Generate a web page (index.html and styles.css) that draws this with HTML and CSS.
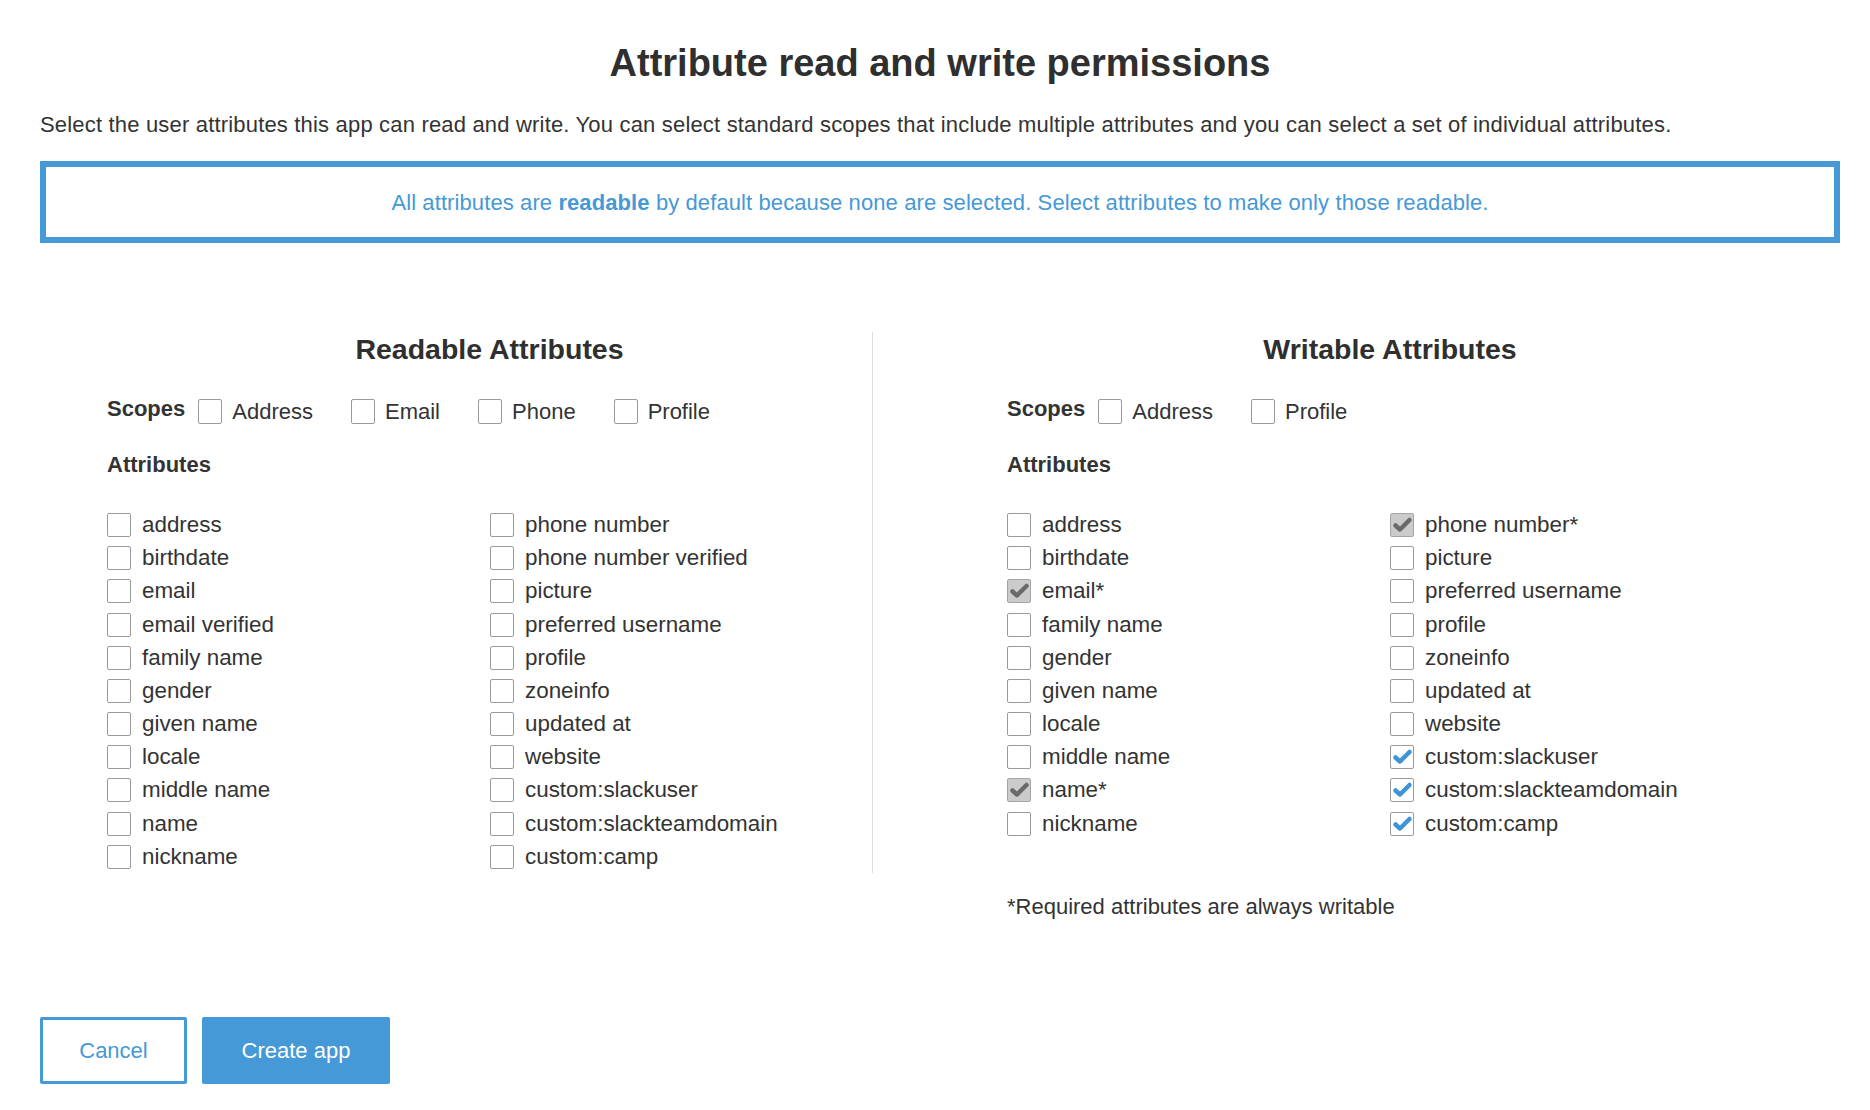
FILE: index.html
```html
<!DOCTYPE html>
<html lang="en">
<head>
<meta charset="utf-8">
<title>Attribute read and write permissions</title>
<link rel="stylesheet" href="styles.css">
</head>
<body>
<div class="page">
  <h1 class="title">Attribute read and write permissions</h1>
  <p class="desc">Select the user attributes this app can read and write. You can select standard scopes that include multiple attributes and you can select a set of individual attributes.</p>
  <div class="info">All attributes are <b>readable</b> by default because none are selected. Select attributes to make only those readable.</div>

  <div class="columns">
    <section class="col">
      <div class="col-inner divider">
        <h2 class="col-title">Readable Attributes</h2>
        <div class="scopes">
          <span class="scopes-label">Scopes</span>
          <label class="scope"><span class="cb"></span>Address</label>
          <label class="scope"><span class="cb"></span>Email</label>
          <label class="scope"><span class="cb"></span>Phone</label>
          <label class="scope"><span class="cb"></span>Profile</label>
        </div>
        <div class="attr-label">Attributes</div>
        <div class="attr-grid">
          <ul class="attr-list">
            <li><span class="cb"></span>address</li>
            <li><span class="cb"></span>birthdate</li>
            <li><span class="cb"></span>email</li>
            <li><span class="cb"></span>email verified</li>
            <li><span class="cb"></span>family name</li>
            <li><span class="cb"></span>gender</li>
            <li><span class="cb"></span>given name</li>
            <li><span class="cb"></span>locale</li>
            <li><span class="cb"></span>middle name</li>
            <li><span class="cb"></span>name</li>
            <li><span class="cb"></span>nickname</li>
          </ul>
          <ul class="attr-list">
            <li><span class="cb"></span>phone number</li>
            <li><span class="cb"></span>phone number verified</li>
            <li><span class="cb"></span>picture</li>
            <li><span class="cb"></span>preferred username</li>
            <li><span class="cb"></span>profile</li>
            <li><span class="cb"></span>zoneinfo</li>
            <li><span class="cb"></span>updated at</li>
            <li><span class="cb"></span>website</li>
            <li><span class="cb"></span>custom:slackuser</li>
            <li><span class="cb"></span>custom:slackteamdomain</li>
            <li><span class="cb"></span>custom:camp</li>
          </ul>
        </div>
      </div>
    </section>

    <section class="col">
      <div class="col-inner">
        <h2 class="col-title">Writable Attributes</h2>
        <div class="scopes">
          <span class="scopes-label">Scopes</span>
          <label class="scope"><span class="cb"></span>Address</label>
          <label class="scope"><span class="cb"></span>Profile</label>
        </div>
        <div class="attr-label">Attributes</div>
        <div class="attr-grid">
          <ul class="attr-list">
            <li><span class="cb"></span>address</li>
            <li><span class="cb"></span>birthdate</li>
            <li><span class="cb cb-locked"><svg viewBox="0 0 22 22"><path d="M4.5 11.5 L9 15.5 L18.5 6"/></svg></span>email*</li>
            <li><span class="cb"></span>family name</li>
            <li><span class="cb"></span>gender</li>
            <li><span class="cb"></span>given name</li>
            <li><span class="cb"></span>locale</li>
            <li><span class="cb"></span>middle name</li>
            <li><span class="cb cb-locked"><svg viewBox="0 0 22 22"><path d="M4.5 11.5 L9 15.5 L18.5 6"/></svg></span>name*</li>
            <li><span class="cb"></span>nickname</li>
          </ul>
          <ul class="attr-list">
            <li><span class="cb cb-locked"><svg viewBox="0 0 22 22"><path d="M4.5 11.5 L9 15.5 L18.5 6"/></svg></span>phone number*</li>
            <li><span class="cb"></span>picture</li>
            <li><span class="cb"></span>preferred username</li>
            <li><span class="cb"></span>profile</li>
            <li><span class="cb"></span>zoneinfo</li>
            <li><span class="cb"></span>updated at</li>
            <li><span class="cb"></span>website</li>
            <li><span class="cb cb-on"><svg viewBox="0 0 22 22"><path d="M4.5 11.5 L9 15.5 L18.5 6"/></svg></span>custom:slackuser</li>
            <li><span class="cb cb-on"><svg viewBox="0 0 22 22"><path d="M4.5 11.5 L9 15.5 L18.5 6"/></svg></span>custom:slackteamdomain</li>
            <li><span class="cb cb-on"><svg viewBox="0 0 22 22"><path d="M4.5 11.5 L9 15.5 L18.5 6"/></svg></span>custom:camp</li>
          </ul>
        </div>
        <p class="note">*Required attributes are always writable</p>
      </div>
    </section>
  </div>

  <div class="actions">
    <button class="btn btn-outline">Cancel</button>
    <button class="btn btn-primary">Create app</button>
  </div>
</div>
</body>
</html>
```

FILE: styles.css
```css
* { box-sizing: border-box; }
html, body { margin: 0; padding: 0; background: #fff; }
body {
  font-family: "Liberation Sans", Arial, Helvetica, sans-serif;
  color: #333;
}
.page {
  width: 1870px;
  padding: 40px 30px 0 40px;
}
.title {
  margin: 0;
  font-size: 38px;
  line-height: 46px;
  font-weight: bold;
  text-align: center;
  color: #2f2f2f;
}
.desc {
  margin: 27px 0 0 0;
  font-size: 22px;
  line-height: 24px;
  letter-spacing: 0.18px;
}
.info {
  margin-top: 24px;
  height: 82px;
  border: 6px solid #4599d6;
  padding-top: 2px;
  line-height: 68px;
  font-size: 22px;
  letter-spacing: 0.1px;
  text-align: center;
  color: #4599d6;
}
.info b { font-weight: bold; }
.columns {
  display: flex;
  margin-top: 89px;
}
.col {
  width: 900px;
  padding: 0 67px;
}
.col-inner.divider {
  border-right: 1px solid #ddd;
}
.col-title {
  margin: 0;
  font-size: 28.5px;
  line-height: 34px;
  font-weight: bold;
  text-align: center;
  color: #2f2f2f;
}
.scopes {
  display: flex;
  align-items: center;
  margin-top: 30px;
  font-size: 22px;
  line-height: 25px;
}
.scopes-label {
  font-weight: bold;
  margin-right: 13px;
  margin-bottom: 6px;
}
.scope {
  display: flex;
  align-items: center;
  margin-right: 38px;
}
.cb {
  flex: none;
  width: 24px;
  height: 24px;
  border: 1px solid #9a9a9a;
  border-radius: 2px;
  background: #fff;
  margin-right: 11px;
  display: flex;
  align-items: center;
  justify-content: center;
}
.scope .cb { height: 25px; margin-right: 10px; }
.cb svg {
  width: 22px;
  height: 22px;
  fill: none;
  stroke-width: 4.5;
  stroke-linecap: round;
  stroke-linejoin: round;
}
.cb-locked { background: #cbcbcb; border-color: #a5a5a5; }
.cb-locked svg { stroke: #6a6a6a; }
.cb-on svg { stroke: #3d95d8; }
.attr-label {
  margin-top: 25px;
  font-size: 22px;
  line-height: 26px;
  font-weight: bold;
}
.attr-grid {
  display: grid;
  grid-template-columns: 383px 383px;
  margin-top: 30.4px;
}
.attr-list {
  list-style: none;
  margin: 0;
  padding: 0;
}
.attr-list li {
  display: flex;
  align-items: center;
  height: 33.2px;
  font-size: 22.4px;
  white-space: nowrap;
}
.note {
  margin: 55px 0 0 0;
  font-size: 22px;
  line-height: 24px;
}
.actions {
  display: flex;
  gap: 15px;
  margin-top: 98px;
}
.btn {
  height: 67px;
  border: 3px solid #4599d6;
  border-radius: 2px;
  font-family: inherit;
  font-size: 22px;
  padding: 0;
  cursor: pointer;
}
.btn-outline { width: 147px; background: #fff; color: #4599d6; }
.btn-primary { width: 188px; background: #4599d6; color: #fff; }
```
